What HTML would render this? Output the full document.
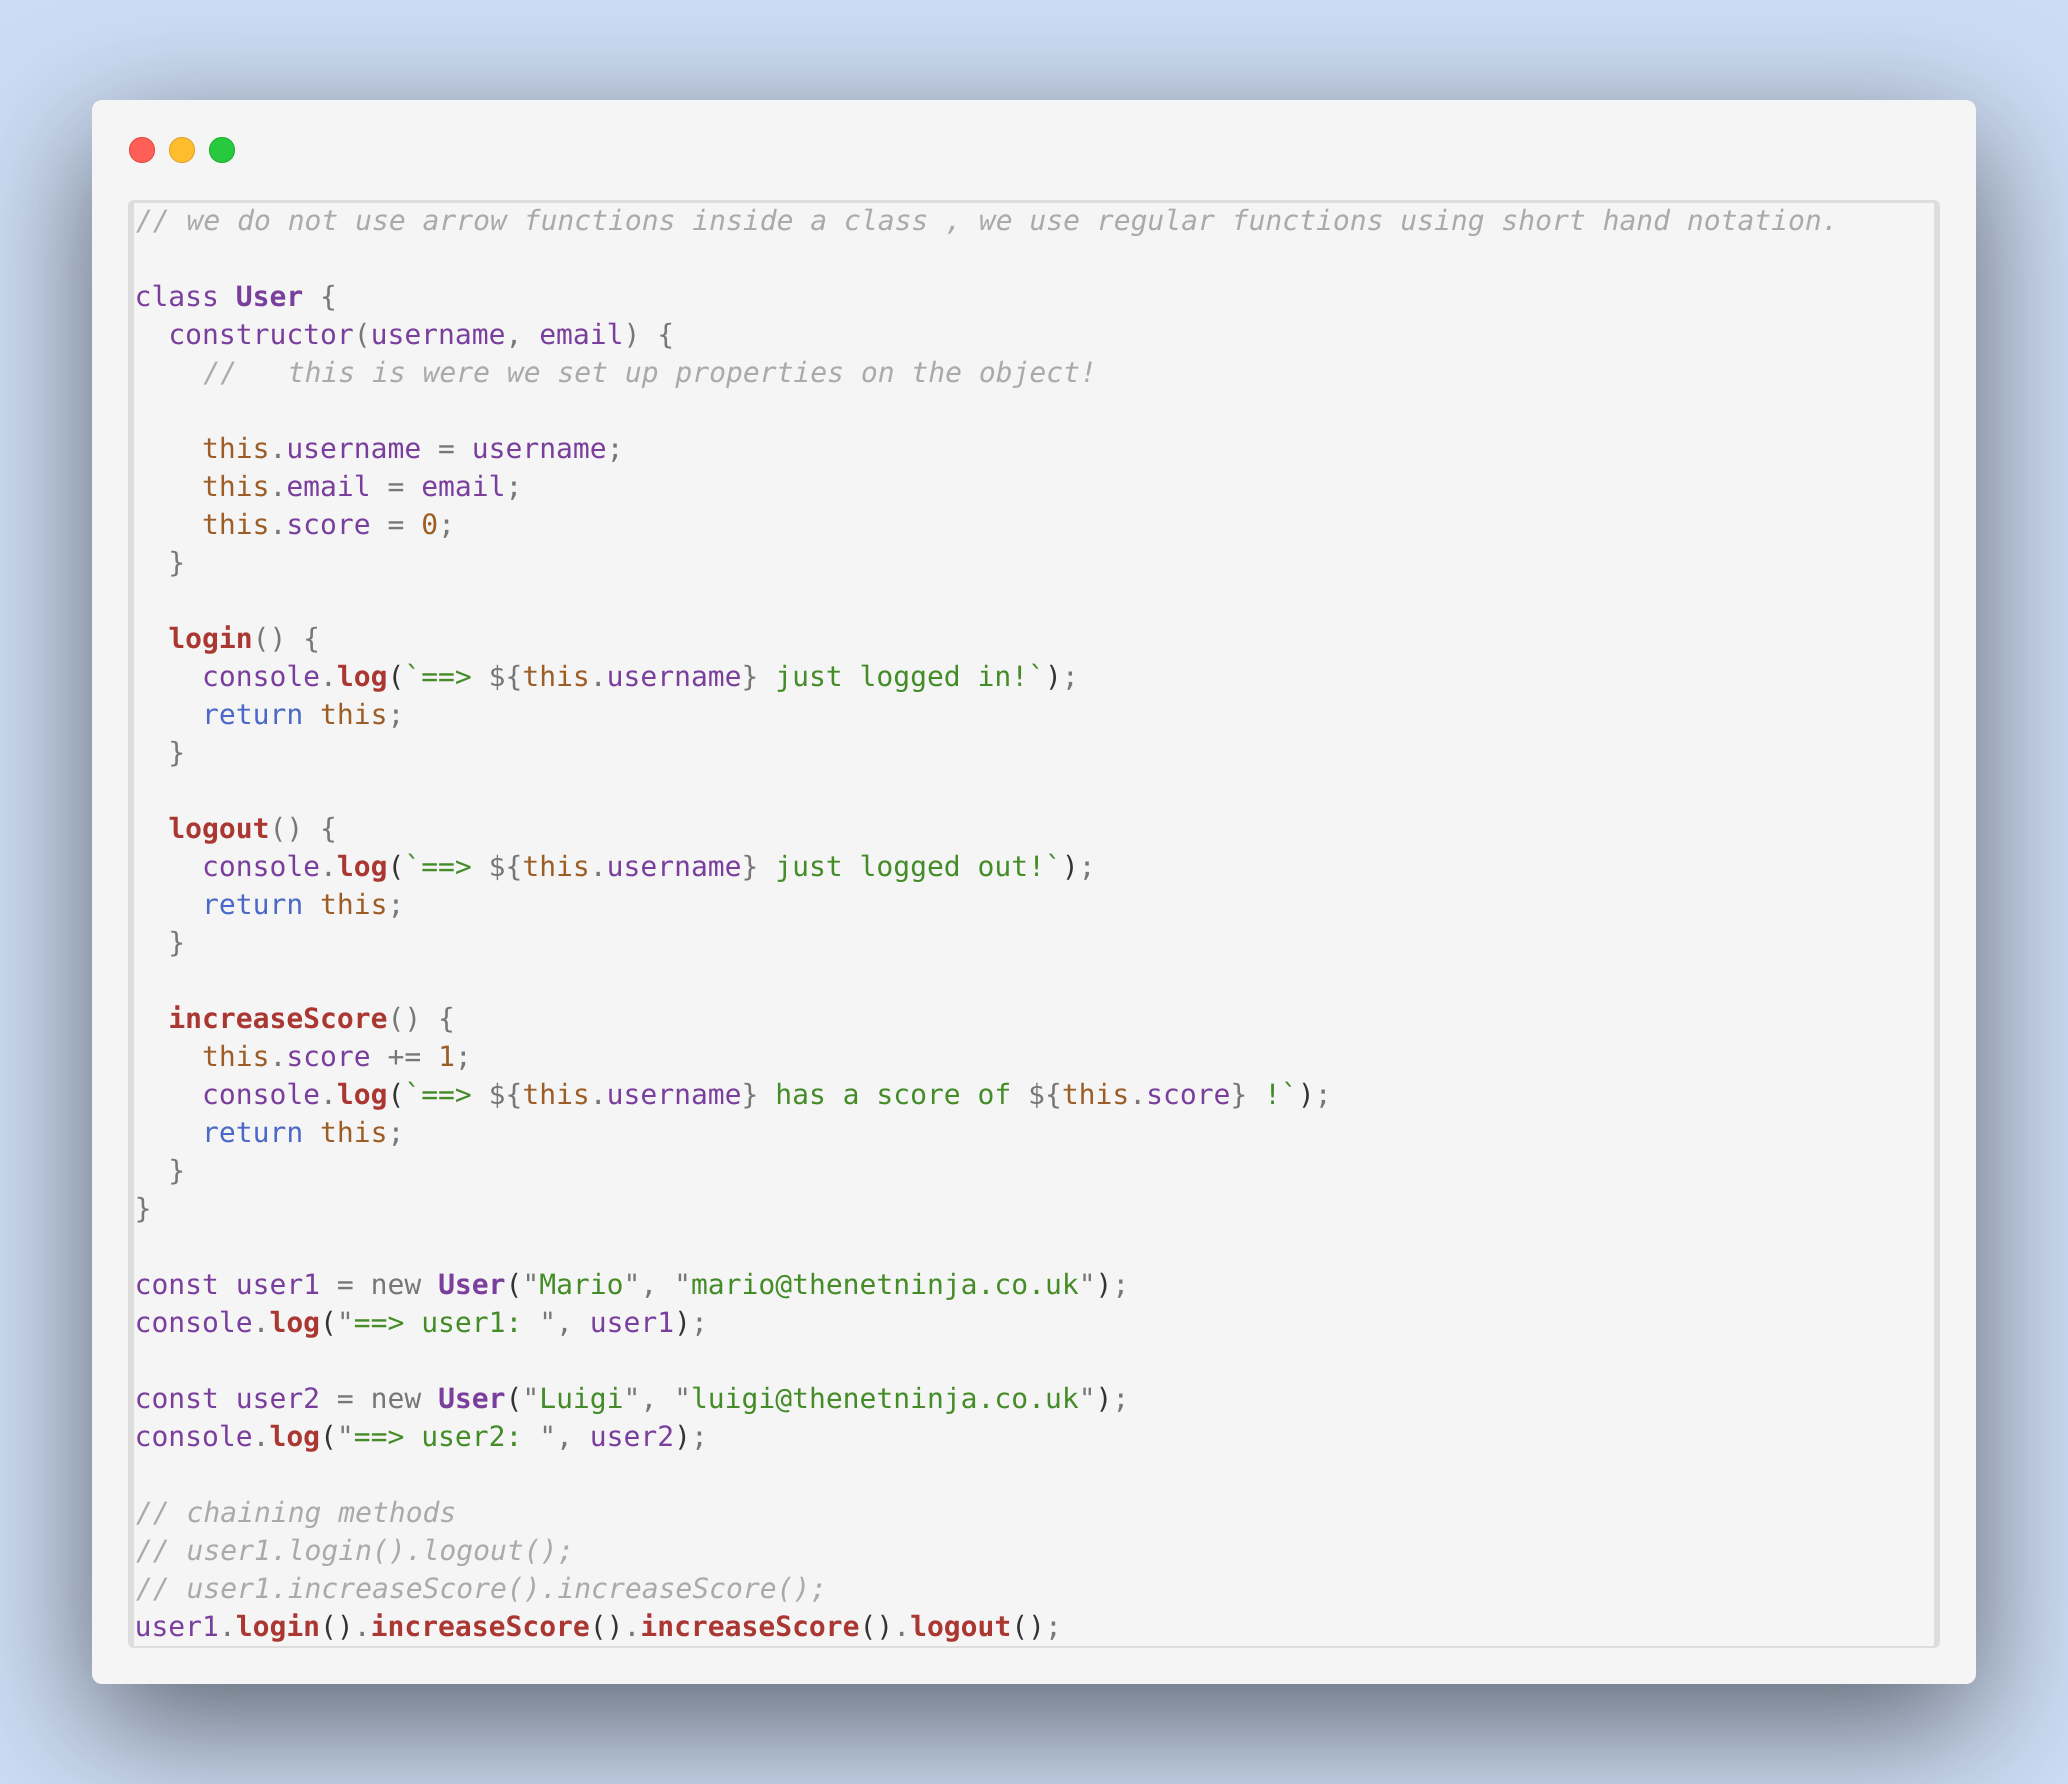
<!DOCTYPE html>
<html><head><meta charset="utf-8"><style>
html,body{margin:0;padding:0;width:2068px;height:1784px;overflow:hidden;background:#cddcf3}
#w{position:absolute;left:92px;top:100px;width:1884px;height:1584px;background:#f5f5f5;border-radius:10px;box-shadow:0 40px 136px rgba(0,0,0,.55)}
.d{position:absolute;top:137.4px;width:25.4px;height:25.4px;border-radius:50%;box-sizing:border-box}
#e{position:absolute;left:128px;top:200px;width:1812px;height:1448px;box-sizing:border-box;border:solid #ddd;border-width:3px 6px 2px 6px;border-radius:6px}
pre{position:absolute;left:134.6px;top:202px;margin:0;font:28px/38px "DejaVu Sans Mono",monospace;color:#777;white-space:pre;text-rendering:geometricPrecision;filter:blur(.3px)}
.c{color:#aaa;font-style:italic;position:relative;left:1.4px}.v{color:#7a3e9d}.b{color:#7a3e9d;font-weight:bold}.f{color:#aa3731;font-weight:bold}.t{color:#9c5d27}.s{color:#448c27}.k{color:#4b69c6}.p{color:#333}
</style></head><body>
<div id="w"></div>
<div class="d" style="left:129.3px;background:#ff5f56;border:1px solid #e0443e"></div>
<div class="d" style="left:169.3px;background:#ffbd2e;border:1px solid #dea123"></div>
<div class="d" style="left:209.3px;background:#27c93f;border:1px solid #1aab29"></div>
<div id="e"></div>
<pre><span class="c">// we do not use arrow functions inside a class , we use regular functions using short hand notation.</span>

<span class="v">class</span> <span class="b">User</span> {
  <span class="v">constructor</span>(<span class="v">username</span>, <span class="v">email</span>) {
    <span class="c">//   this is were we set up properties on the object!</span>

    <span class="t">this</span>.<span class="v">username</span> = <span class="v">username</span>;
    <span class="t">this</span>.<span class="v">email</span> = <span class="v">email</span>;
    <span class="t">this</span>.<span class="v">score</span> = <span class="t">0</span>;
  }

  <span class="f">login</span>() {
    <span class="v">console</span>.<span class="f">log</span><span class="p">(</span><span class="s">`==&gt;</span> ${<span class="t">this</span>.<span class="v">username</span>} <span class="s">just logged in!`</span><span class="p">)</span>;
    <span class="k">return</span> <span class="t">this</span>;
  }

  <span class="f">logout</span>() {
    <span class="v">console</span>.<span class="f">log</span><span class="p">(</span><span class="s">`==&gt;</span> ${<span class="t">this</span>.<span class="v">username</span>} <span class="s">just logged out!`</span><span class="p">)</span>;
    <span class="k">return</span> <span class="t">this</span>;
  }

  <span class="f">increaseScore</span>() {
    <span class="t">this</span>.<span class="v">score</span> += <span class="t">1</span>;
    <span class="v">console</span>.<span class="f">log</span><span class="p">(</span><span class="s">`==&gt;</span> ${<span class="t">this</span>.<span class="v">username</span>} <span class="s">has a score of</span> ${<span class="t">this</span>.<span class="v">score</span>} <span class="s">!`</span><span class="p">)</span>;
    <span class="k">return</span> <span class="t">this</span>;
  }
}

<span class="v">const</span> <span class="v">user1</span> = new <span class="b">User</span><span class="p">(</span>"<span class="s">Mario</span>", "<span class="s">mario@thenetninja.co.uk</span>"<span class="p">)</span>;
<span class="v">console</span>.<span class="f">log</span><span class="p">(</span>"<span class="s">==&gt; user1: </span>", <span class="v">user1</span><span class="p">)</span>;

<span class="v">const</span> <span class="v">user2</span> = new <span class="b">User</span><span class="p">(</span>"<span class="s">Luigi</span>", "<span class="s">luigi@thenetninja.co.uk</span>"<span class="p">)</span>;
<span class="v">console</span>.<span class="f">log</span><span class="p">(</span>"<span class="s">==&gt; user2: </span>", <span class="v">user2</span><span class="p">)</span>;

<span class="c">// chaining methods</span>
<span class="c">// user1.login().logout();</span>
<span class="c">// user1.increaseScore().increaseScore();</span>
<span class="v">user1</span>.<span class="f">login</span><span class="p">()</span>.<span class="f">increaseScore</span><span class="p">()</span>.<span class="f">increaseScore</span><span class="p">()</span>.<span class="f">logout</span><span class="p">()</span>;</pre>
</body></html>
